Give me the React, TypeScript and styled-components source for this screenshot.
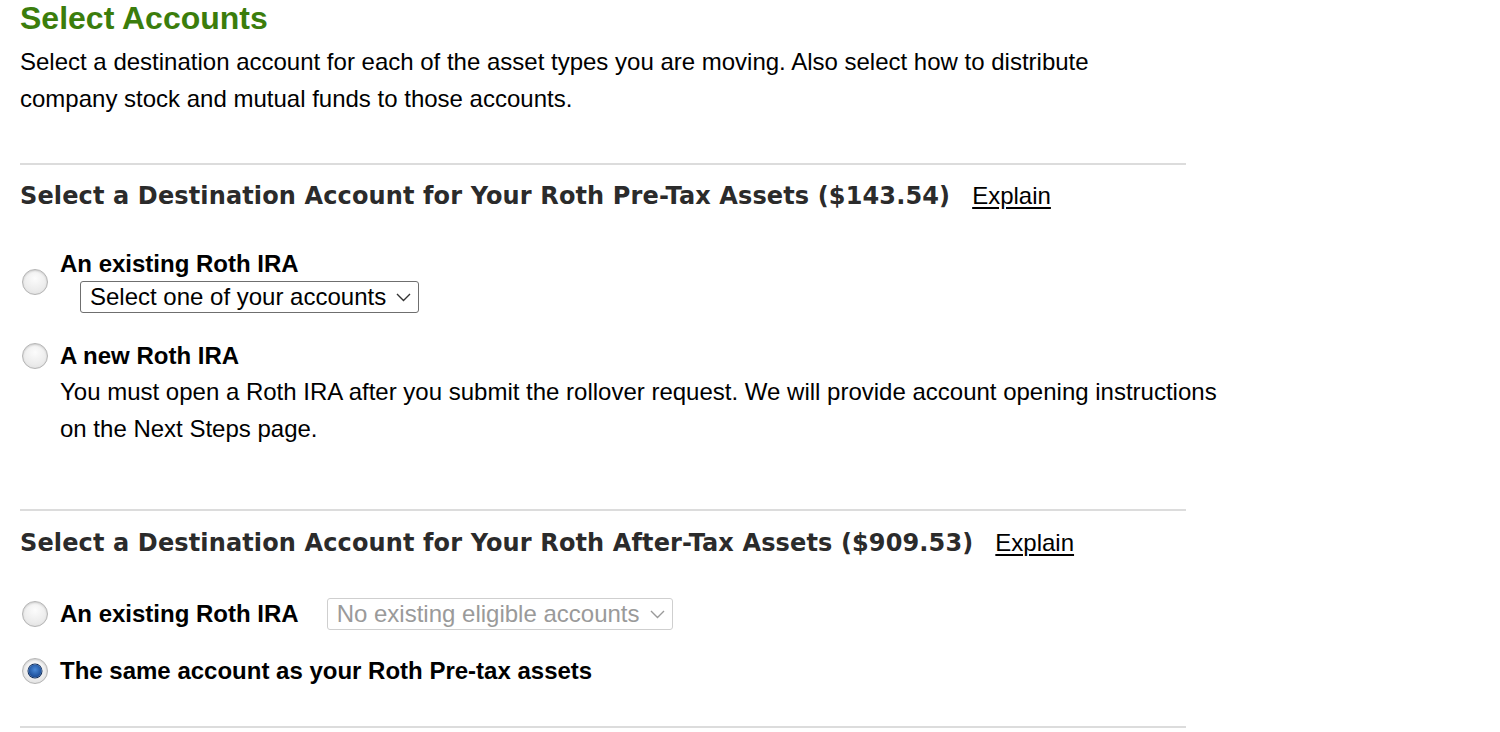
import styled, { createGlobalStyle } from "styled-components";

const GlobalStyle = createGlobalStyle`
  body {
    margin: 0;
    background: #fff;
    font-family: "Liberation Sans", Arial, sans-serif;
    color: #000;
  }
`;

const Page = styled.div`
  padding: 0 20px;
  width: 1200px;
`;

const Title = styled.h1`
  margin: 0;
  padding-top: 1px;
  font-size: 32px;
  line-height: 34px;
  font-weight: 700;
  color: #3b7d0c;
`;

const Intro = styled.p`
  margin: 8px 0 0;
  width: 1100px;
  font-size: 24px;
  line-height: 37px;
`;

const Rule = styled.hr`
  margin: 0;
  width: 1166px;
  border: 0;
  border-top: 2px solid #dcdcdc;
`;

const Block = styled.div<{ $top: number; $bottom?: number }>`
  padding: ${(p) => p.$top}px 0 ${(p) => p.$bottom ?? 0}px;
`;

const Heading = styled.h2`
  display: flex;
  align-items: baseline;
  gap: 22px;
  margin: 0;
  font-family: "DejaVu Sans", Verdana, sans-serif;
  font-size: 24px;
  line-height: 28px;
  letter-spacing: 0.13px;
  font-weight: 700;
  color: #2b2b2b;
`;

const Explain = styled.a`
  font-family: "Liberation Sans", Arial, sans-serif;
  font-size: 24px;
  font-weight: 400;
  letter-spacing: 0;
  color: #000;
  text-decoration: underline;
  text-underline-offset: 3px;
`;

const Options = styled.div<{ $gap: number; $top: number }>`
  display: flex;
  flex-direction: column;
  gap: ${(p) => p.$gap}px;
  margin-top: ${(p) => p.$top}px;
`;

const Option = styled.div<{ $center?: boolean }>`
  display: flex;
  align-items: ${(p) => (p.$center ? "center" : "flex-start")};
  gap: 12px;
`;

const Radio = styled.span<{ $checked?: boolean; $offset?: number }>`
  flex: none;
  position: relative;
  width: 26px;
  height: 26px;
  margin-top: ${(p) => p.$offset ?? 0}px;
  margin-left: 2px;
  border-radius: 50%;
  box-sizing: border-box;
  border: 1px solid #b4b4b4;
  background: radial-gradient(circle at 50% 35%, #fcfcfc 0%, #ececec 60%, #dcdcdc 100%);
  box-shadow: inset 0 1px 2px rgba(0, 0, 0, 0.15);
  &::after {
    content: "";
    display: ${(p) => (p.$checked ? "block" : "none")};
    position: absolute;
    left: 50%;
    top: 50%;
    width: 13px;
    height: 13px;
    transform: translate(-50%, -50%);
    border-radius: 50%;
    background: radial-gradient(circle at 50% 40%, #4a8ad8 0%, #1d4f9a 70%, #143a73 100%);
    box-shadow: 0 0 0 1px #0f2d5c;
  }
`;

const OptionBody = styled.div`
  display: flex;
  flex-direction: column;
  align-items: flex-start;
`;

const Label = styled.span`
  font-size: 24px;
  font-weight: 700;
  line-height: 26px;
`;

const Desc = styled.p`
  margin: 4px 0 0;
  width: 1168px;
  font-size: 24px;
  line-height: 37px;
`;

const SelectBox = styled.div<{ $disabled?: boolean; $indent?: number }>`
  display: inline-flex;
  align-items: center;
  gap: 10px;
  height: 32px;
  box-sizing: border-box;
  margin-left: ${(p) => p.$indent ?? 0}px;
  padding: 0 7px 0 9px;
  font-size: 24px;
  border-radius: 3px;
  border: 1px solid ${(p) => (p.$disabled ? "#cfcfcf" : "#6f6f6f")};
  color: ${(p) => (p.$disabled ? "#9a9a9a" : "#000")};
  background: #fff;
  svg {
    stroke: ${(p) => (p.$disabled ? "#9a9a9a" : "#333")};
  }
`;

const Chevron = () => (
  <svg width="15" height="9" viewBox="0 0 15 9" fill="none" strokeWidth="1.4">
    <path d="M1 1l6.5 6.5L14 1" />
  </svg>
);

export default function App() {
  return (
    <Page>
      <GlobalStyle />
      <Title>Select Accounts</Title>
      <Intro>
        Select a destination account for each of the asset types you are moving. Also select how to
        distribute company stock and mutual funds to those accounts.
      </Intro>

      <Block $top={46}>
        <Rule />
      </Block>
      <Block $top={17}>
        <Heading>
          Select a Destination Account for Your Roth Pre-Tax Assets ($143.54)
          <Explain href="#">Explain</Explain>
        </Heading>
      </Block>
      <Options $gap={30} $top={41}>
        <Option>
          <Radio $offset={18} />
          <OptionBody>
            <Label>An existing Roth IRA</Label>
            <Block $top={4}>
              <SelectBox $indent={20}>
                Select one of your accounts
                <Chevron />
              </SelectBox>
            </Block>
          </OptionBody>
        </Option>
        <Option>
          <Radio />
          <OptionBody>
            <Label>A new Roth IRA</Label>
            <Desc>
              You must open a Roth IRA after you submit the rollover request. We will provide account
              opening instructions on the Next Steps page.
            </Desc>
          </OptionBody>
        </Option>
      </Options>

      <Block $top={62}>
        <Rule />
      </Block>
      <Block $top={18}>
        <Heading>
          Select a Destination Account for Your Roth After-Tax Assets ($909.53)
          <Explain href="#">Explain</Explain>
        </Heading>
      </Block>
      <Options $gap={28} $top={41}>
        <Option $center>
          <Radio />
          <Label>An existing Roth IRA</Label>
          <SelectBox $disabled $indent={16}>
            No existing eligible accounts
            <Chevron />
          </SelectBox>
        </Option>
        <Option $center>
          <Radio $checked />
          <Label>The same account as your Roth Pre-tax assets</Label>
        </Option>
      </Options>
      <Block $top={42}>
        <Rule />
      </Block>
    </Page>
  );
}
